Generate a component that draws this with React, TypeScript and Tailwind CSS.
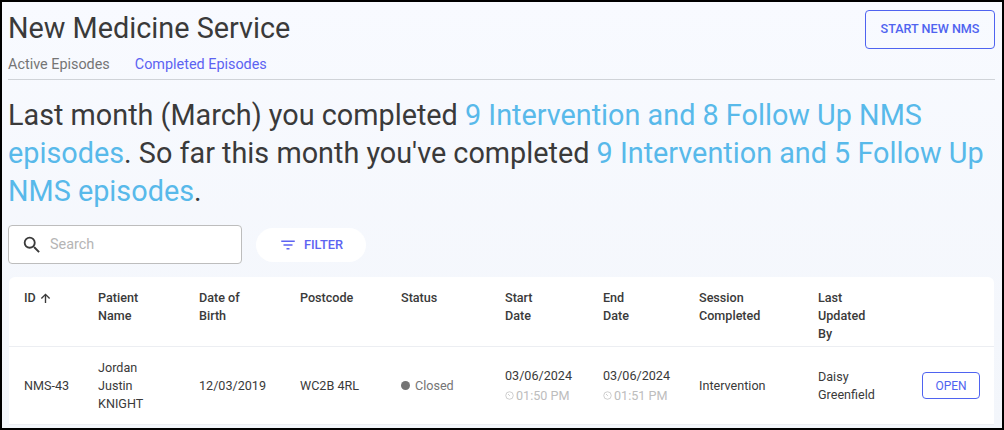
import { MdFilterList, MdSearch } from 'react-icons/md';

const headers = [
  { label: ['ID'], width: 'w-[74px]' },
  { label: ['Patient', 'Name'], width: 'w-[101px]' },
  { label: ['Date of', 'Birth'], width: 'w-[101px]' },
  { label: ['Postcode'], width: 'w-[101px]' },
  { label: ['Status'], width: 'w-[104px]' },
  { label: ['Start', 'Date'], width: 'w-[98px]' },
  { label: ['End', 'Date'], width: 'w-[96px]' },
  { label: ['Session', 'Completed'], width: 'w-[119px]' },
  { label: ['Last', 'Updated', 'By'], width: 'w-[104px]' },
];

function ClockIcon() {
  return (
    <svg viewBox="0 0 24 24" className="h-[9px] w-[9px] fill-none stroke-[#bdbdbd] stroke-2">
      <circle cx="12" cy="12" r="10" />
      <path d="M8 8l5 5" />
    </svg>
  );
}

function DateCell({ date, time, width }: { date: string; time: string; width: string }) {
  return (
    <div className={width}>
      <div className="leading-[18px]">{date}</div>
      <div className="mt-[2px] flex items-center gap-[2px] leading-[18px] text-[#bdbdbd]">
        <ClockIcon />
        {time}
      </div>
    </div>
  );
}

export default function App() {
  return (
    <div className="h-[430px] w-[1004px] overflow-hidden border-2 border-black bg-linear-to-b from-[#f8faff] to-[#f3f6fb] font-['Roboto',sans-serif] text-[#3a3a3a]">
      <div className="pl-[6px] pr-[7px]">
        <div className="flex items-start justify-between border-b border-[#d0d3d8] pb-[4px]">
          <div>
            <h1 className="pt-[7px] text-[28.8px] leading-[38px]">New Medicine Service</h1>
            <div className="mt-[8px] flex gap-[25px] text-[14.4px] leading-[20px]">
              <span className="text-[#757575]">Active Episodes</span>
              <span className="text-[#5c63f2]">Completed Episodes</span>
            </div>
          </div>
          <button className="mt-[8px] h-[39px] w-[130px] rounded-[4px] border border-[#4f63f0] text-[12.6px] font-medium text-[#4f63f0]">
            START NEW NMS
          </button>
        </div>

        <p className="mt-[16px] text-[28.8px] leading-[38px]">
          Last month (March) you completed <span className="text-[#58b9ea]">9 Intervention and 8 Follow Up NMS episodes</span>. So far this month you've completed <span className="text-[#58b9ea]">9 Intervention and 5 Follow Up NMS episodes</span>.
        </p>

        <div className="mt-[15px] flex items-center gap-[14px]">
          <div className="flex h-[39px] w-[234px] items-center rounded-[4px] border border-[#bdbdbd] bg-white pl-[12px]">
            <MdSearch className="h-[22px] w-[22px] text-[#3a3a3a]" />
            <span className="ml-[7px] text-[14.4px] text-[#b5b5b5]">Search</span>
          </div>
          <button className="flex h-[34px] w-[110px] items-center justify-center gap-[7px] rounded-full bg-white text-[12.8px] font-medium text-[#5c63f2]">
            <MdFilterList className="h-[18px] w-[18px]" />
            FILTER
          </button>
        </div>

        <div className="mt-[13px] ml-[1px] mr-[1px] rounded-t-[6px] bg-white text-[12.6px]">
          <div className="flex h-[70px] border-b border-[#eceef2] pl-[15px] pt-[12px] font-medium leading-[18px]">
            {headers.map((h) => (
              <div key={h.label[0]} className={h.width}>
                {h.label[0] === 'ID' ? (
                  <div className="flex items-center gap-[4px]">
                    ID
                    <svg viewBox="0 0 12 12" className="h-[11px] w-[11px] fill-none stroke-[#3a3a3a] stroke-[1.5]">
                      <path d="M6 11V1.5M1.5 6L6 1.5L10.5 6" />
                    </svg>
                  </div>
                ) : (
                  h.label.map((line) => <div key={line}>{line}</div>)
                )}
              </div>
            ))}
          </div>
          <div className="flex h-[78px] items-center border-b border-[#eceef2] pl-[15px] leading-[18px]">
            <div className="w-[74px]">NMS-43</div>
            <div className="w-[101px]">
              <div>Jordan</div>
              <div>Justin</div>
              <div>KNIGHT</div>
            </div>
            <div className="w-[101px]">12/03/2019</div>
            <div className="w-[101px]">WC2B 4RL</div>
            <div className="flex w-[104px] items-center gap-[5px] text-[#757575]">
              <span className="h-[9px] w-[9px] rounded-full bg-[#757575]" />
              Closed
            </div>
            <DateCell date="03/06/2024" time="01:50 PM" width="w-[98px]" />
            <DateCell date="03/06/2024" time="01:51 PM" width="w-[96px]" />
            <div className="w-[119px]">Intervention</div>
            <div className="w-[104px]">
              <div>Daisy</div>
              <div>Greenfield</div>
            </div>
            <button className="h-[27px] w-[58px] rounded-[4px] border border-[#4f63f0] text-[12px] font-normal text-[#4f63f0]">
              OPEN
            </button>
          </div>
        </div>
      </div>
    </div>
  );
}
